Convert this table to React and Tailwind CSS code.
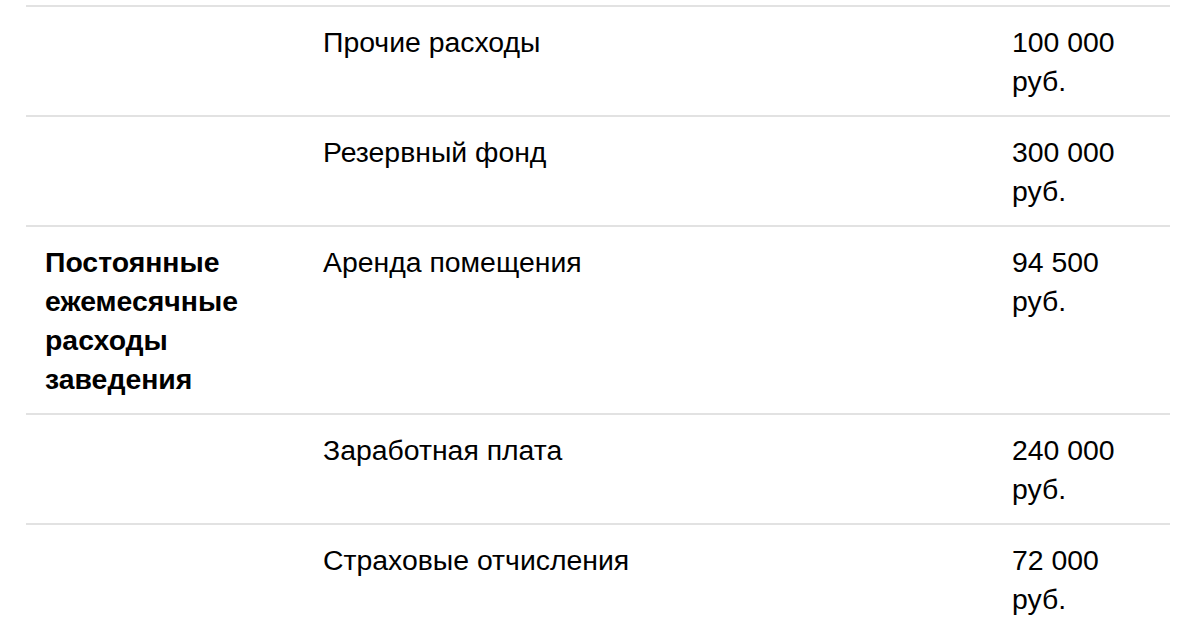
export default function App() {
  const rows = [
    { label: "", name: "Прочие расходы", value: "100 000 руб." },
    { label: "", name: "Резервный фонд", value: "300 000 руб." },
    { label: "Постоянные ежемесячные расходы заведения", name: "Аренда помещения", value: "94 500 руб." },
    { label: "", name: "Заработная плата", value: "240 000 руб." },
    { label: "", name: "Страховые отчисления", value: "72 000 руб." },
  ];
  return (
    <div
      className="w-[1200px] h-[633px] overflow-hidden bg-white pt-[5px] pl-[26px] pr-[30px] text-[28.4px] leading-[39px] text-black"
      style={{ fontFamily: '"Liberation Sans", Arial, sans-serif' }}
    >
      {rows.map((r, i) => (
        <div
          key={i}
          className="grid grid-cols-[278px_689px_1fr] border-t-2 border-[#e2e2e2] pt-4 pb-[14px]"
        >
          <div className="px-[19px] font-bold">{r.label}</div>
          <div className="px-[19px]">{r.name}</div>
          <div className="px-[19px]">{r.value}</div>
        </div>
      ))}
    </div>
  );
}
